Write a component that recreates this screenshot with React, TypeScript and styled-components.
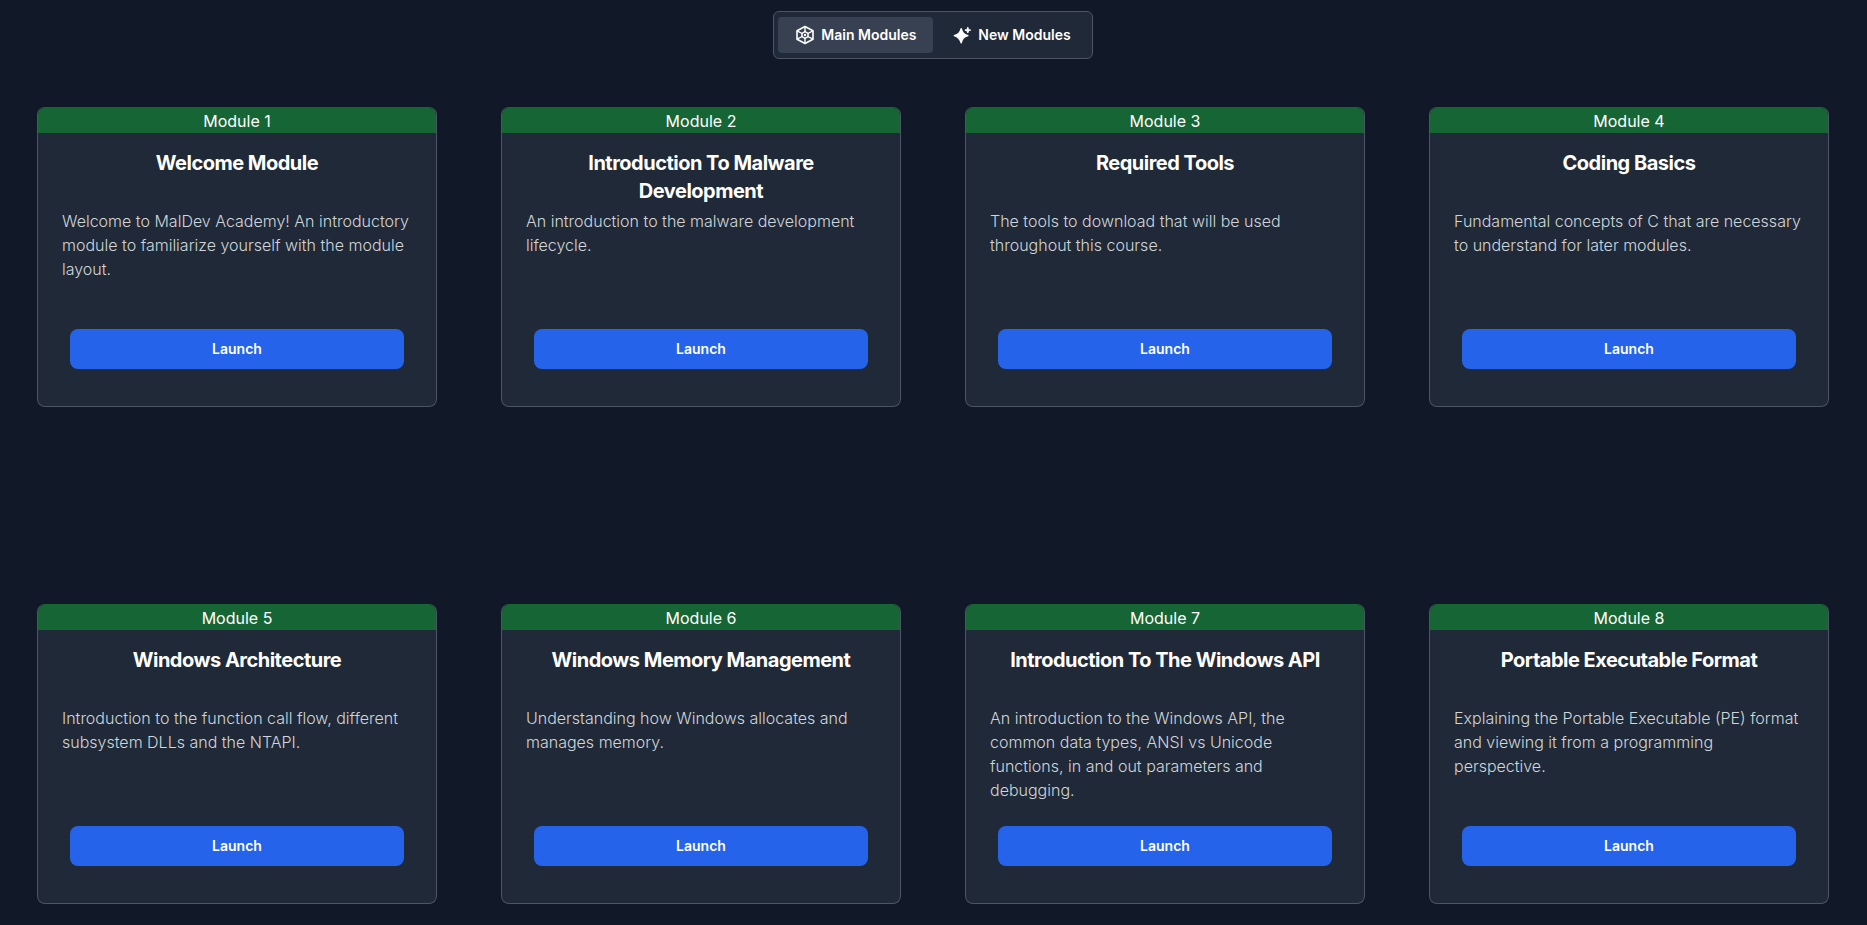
import React, { useState } from "react";
import styled, { createGlobalStyle } from "styled-components";

const GlobalStyle = createGlobalStyle`
  *, *::before, *::after { box-sizing: border-box; }
  body {
    margin: 0;
    background: #111827;
    color: #ffffff;
    font-family: Inter, "Liberation Sans", sans-serif;
    font-size: 16px;
    line-height: 24px;
  }
  button { font: inherit; color: inherit; border: 0; cursor: pointer; }
  h2, p { margin: 0; }
`;

const Page = styled.div`
  display: flex;
  flex-direction: column;
  align-items: center;
  gap: 48px;
  padding: 11px 17px 21px 16px;
`;

const Tabs = styled.nav`
  display: flex;
  align-items: center;
  gap: 2px;
  padding: 5px 4px;
  border: 1px solid #4b5563;
  border-radius: 6px;
  background: #1f2937;
`;

const Tab = styled.button<{ $active: boolean }>`
  display: flex;
  align-items: center;
  gap: 6px;
  height: 36px;
  padding: 0 17px;
  border-radius: 4px;
  background: ${(p) => (p.$active ? "#374151" : "transparent")};
  font-size: 14px;
  line-height: 20px;
  font-weight: 600;
`;

const Icon = styled.svg`
  width: 20px;
  height: 20px;
  flex: none;
`;

const Grid = styled.main`
  display: grid;
  grid-template-columns: repeat(auto-fit, 400px);
  justify-content: center;
  gap: 197px 64px;
  width: 100%;
`;

const Card = styled.article`
  display: flex;
  flex-direction: column;
  min-height: 300px;
  overflow: hidden;
  border: 1px solid #4b5563;
  border-top-color: #166534;
  border-radius: 8px;
  background: #1f2937;
`;

const CardLabel = styled.div`
  padding-top: 1px;
  background: #166534;
  text-align: center;
`;

const CardBody = styled.div`
  display: flex;
  flex: 1;
  flex-direction: column;
  padding: 16px 24px 37px;
`;

const CardTitle = styled.h2`
  min-height: 60px;
  padding: 0 16px;
  text-align: center;
  font-size: 20px;
  line-height: 28px;
  font-weight: 700;
  letter-spacing: -0.025em;
`;

const CardText = styled.p`
  min-height: 96px;
  color: #d1d5db;
  font-weight: 300;
`;

const Launch = styled.button`
  height: 40px;
  margin: auto 8px 0;
  border-radius: 8px;
  background: #2563eb;
  font-size: 14px;
  line-height: 20px;
  font-weight: 600;
`;

const HexIcon = () => (
  <Icon viewBox="0 0 20 20" fill="none" stroke="currentColor" strokeWidth="1.6" strokeLinejoin="round" aria-hidden="true">
    <path d="M10 1.5 18 5.8v8.4L10 18.5 2 14.2V5.8Z" />
    <path d="M10 1.6V7M17.9 5.8 12.9 8.5M17.9 14.2 12.9 11.5M10 18.4V13M2.1 14.2l5-2.7M2.1 5.8l5 2.7" strokeWidth="1.4" />
    <path d="M10 6.6 13 8.3v3.4L10 13.4 7 11.7V8.3Z" strokeWidth="1.5" />
    <circle cx="10" cy="10" r="1.2" fill="currentColor" stroke="none" />
  </Icon>
);

const SparkIcon = () => (
  <Icon viewBox="0 0 20 20" fill="currentColor" aria-hidden="true">
    <path d="M9.2 3.6C10.4 7.8 11.6 9.2 15.9 10.6 11.6 12 10.4 13.6 9.2 17.8 8 13.6 6.6 12 2.3 10.6 6.6 9.2 8 7.8 9.2 3.6Z" stroke="currentColor" strokeWidth="1.4" strokeLinejoin="round" />
    <path d="M15.8 2.2c.5 1.9 1 2.4 2.9 2.9-1.9.5-2.4 1-2.9 2.9-.5-1.9-1-2.4-2.9-2.9 1.9-.5 2.4-1 2.9-2.9Z" stroke="currentColor" strokeWidth="1" strokeLinejoin="round" />
  </Icon>
);

const tabs = [
  { label: "Main Modules", icon: <HexIcon /> },
  { label: "New Modules", icon: <SparkIcon /> },
];

const modules = [
  { title: "Welcome Module", text: "Welcome to MalDev Academy! An introductory module to familiarize yourself with the module layout." },
  { title: "Introduction To Malware Development", text: "An introduction to the malware development lifecycle." },
  { title: "Required Tools", text: "The tools to download that will be used throughout this course." },
  { title: "Coding Basics", text: "Fundamental concepts of C that are necessary to understand for later modules." },
  { title: "Windows Architecture", text: "Introduction to the function call flow, different subsystem DLLs and the NTAPI." },
  { title: "Windows Memory Management", text: "Understanding how Windows allocates and manages memory." },
  { title: "Introduction To The Windows API", text: "An introduction to the Windows API, the common data types, ANSI vs Unicode functions, in and out parameters and debugging." },
  { title: "Portable Executable Format", text: "Explaining the Portable Executable (PE) format and viewing it from a programming perspective." },
];

export default function App() {
  const [active, setActive] = useState(0);
  return (
    <>
      <GlobalStyle />
      <Page>
        <Tabs aria-label="Module lists">
          {tabs.map((tab, i) => (
            <Tab key={tab.label} type="button" $active={i === active} aria-pressed={i === active} onClick={() => setActive(i)}>
              {tab.icon}
              {tab.label}
            </Tab>
          ))}
        </Tabs>
        <Grid>
          {modules.map((m, i) => (
            <Card key={m.title}>
              <CardLabel>Module {i + 1}</CardLabel>
              <CardBody>
                <CardTitle>{m.title}</CardTitle>
                <CardText>{m.text}</CardText>
                <Launch type="button">Launch</Launch>
              </CardBody>
            </Card>
          ))}
        </Grid>
      </Page>
    </>
  );
}
